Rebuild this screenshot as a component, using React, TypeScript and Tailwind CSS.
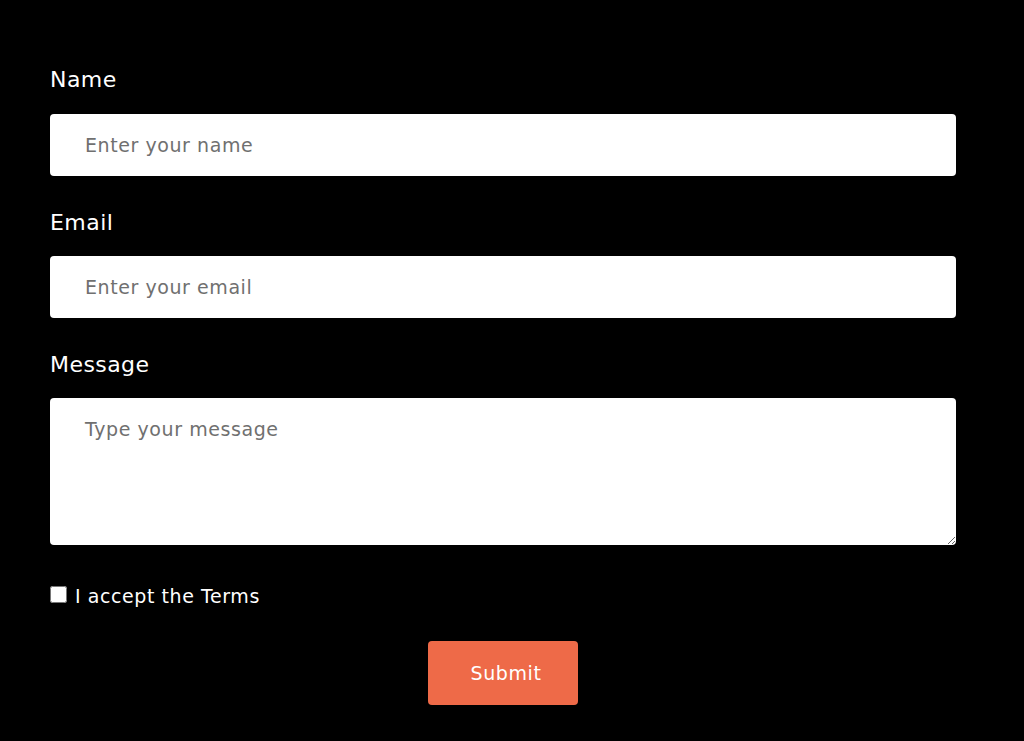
export default function App() {
  return (
    <div
      className="min-h-[741px] w-full bg-black text-white"
      style={{ fontFamily: '"DejaVu Sans", "Open Sans", sans-serif' }}
    >
      <form className="w-[906px] ml-[50px] pt-[65px] flex flex-col" onSubmit={(e) => e.preventDefault()}>
        <label htmlFor="name" className="block text-[22px] leading-[30px] tracking-[0.02em]">
          Name
        </label>
        <input
          id="name"
          type="text"
          placeholder="Enter your name"
          className="mt-[19px] h-[62px] w-full rounded-[4px] bg-white px-[35px] text-[19px] tracking-[0.03em] text-gray-900 placeholder:text-[#707070] outline-none"
        />

        <label htmlFor="email" className="block mt-[32px] text-[22px] leading-[30px] tracking-[0.02em]">
          Email
        </label>
        <input
          id="email"
          type="email"
          placeholder="Enter your email"
          className="mt-[18px] h-[62px] w-full rounded-[4px] bg-white px-[35px] text-[19px] tracking-[0.03em] text-gray-900 placeholder:text-[#707070] outline-none"
        />

        <label htmlFor="message" className="block mt-[32px] text-[22px] leading-[30px] tracking-[0.02em]">
          Message
        </label>
        <textarea
          id="message"
          placeholder="Type your message"
          className="mt-[18px] h-[147px] w-full rounded-[4px] bg-white px-[35px] pt-[17px] text-[19px] tracking-[0.03em] text-gray-900 placeholder:text-[#707070] outline-none"
        />

        <div className="mt-[37px] flex h-[24px] items-center gap-[8px]">
          <input id="terms" type="checkbox" className="h-[17px] w-[17px] m-0" />
          <label htmlFor="terms" className="text-[19px] leading-[24px] tracking-[0.03em] pt-[3px]">
            I accept the Terms
          </label>
        </div>

        <div className="mt-[35px] flex justify-center">
          <button
            type="submit"
            className="h-[64px] w-[150px] rounded-[4px] bg-[#ee6a48] text-[19px] tracking-[0.03em] text-white pl-[6px]"
          >
            Submit
          </button>
        </div>
      </form>
    </div>
  );
}
